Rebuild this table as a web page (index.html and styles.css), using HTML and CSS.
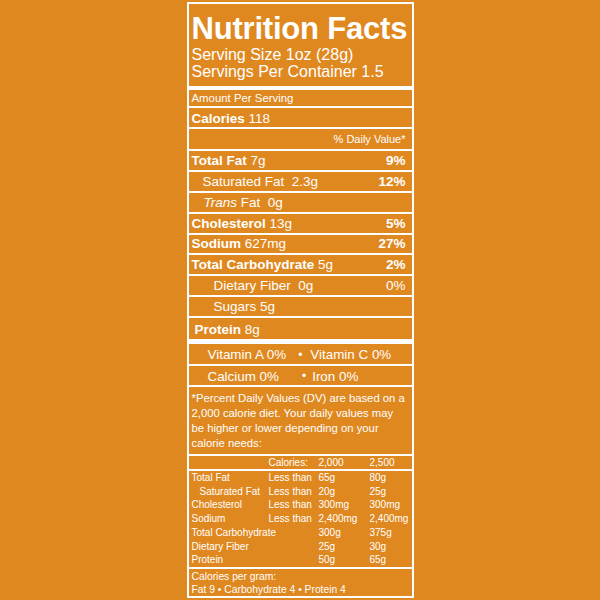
FILE: index.html
```html
<!DOCTYPE html>
<html>
<head>
<meta charset="utf-8">
<link rel="stylesheet" href="styles.css">
</head>
<body>
<div class="label">
  <div class="head">
    <h1 class="title">Nutrition Facts</h1>
    <div class="serving">Serving Size 1oz (28g)</div>
    <div class="serving">Servings Per Container 1.5</div>
  </div>
  <div class="row amount">Amount Per Serving</div>
  <div class="row calories"><span><b>Calories</b> 118</span></div>
  <div class="row dv"><span>% Daily Value*</span></div>
  <div class="row nut"><span><b>Total Fat</b> 7g</span><b>9%</b></div>
  <div class="row nut sub"><span>Saturated Fat&nbsp; 2.3g</span><b>12%</b></div>
  <div class="row nut sub trans"><span><i>Trans</i> Fat&nbsp; 0g</span></div>
  <div class="row nut"><span><b>Cholesterol</b> 13g</span><b>5%</b></div>
  <div class="row nut"><span><b>Sodium</b> 627mg</span><b>27%</b></div>
  <div class="row nut"><span><b>Total Carbohydrate</b> 5g</span><b>2%</b></div>
  <div class="row nut sub2"><span>Dietary Fiber&nbsp; 0g</span><span>0%</span></div>
  <div class="row nut sub2"><span>Sugars 5g</span></div>
  <div class="row nut protein"><span><b>Protein</b> 8g</span></div>
  <div class="row vit"><span class="v1">Vitamin A 0%</span><span class="dot d1">•</span><span class="v2a">Vitamin C 0%</span></div>
  <div class="row vit"><span class="v1">Calcium 0%</span><span class="dot d2">•</span><span class="v2b">Iron 0%</span></div>
  <div class="foot">*Percent Daily Values (DV) are based on a<br>2,000 calorie diet. Your daily values may<br>be higher or lower depending on your<br>calorie needs:</div>
  <div class="thead">
    <span></span><span>Calories:</span><span>2,000</span><span>2,500</span>
  </div>
  <div class="tbody">
    <span>Total Fat</span><span>Less than</span><span>65g</span><span>80g</span>
    <span class="ind">Saturated Fat</span><span>Less than</span><span>20g</span><span>25g</span>
    <span>Cholesterol</span><span>Less than</span><span>300mg</span><span>300mg</span>
    <span>Sodium</span><span>Less than</span><span>2,400mg</span><span>2,400mg</span>
    <span class="wide">Total Carbohydrate</span><span>300g</span><span>375g</span>
    <span class="wide">Dietary Fiber</span><span>25g</span><span>30g</span>
    <span class="wide">Protein</span><span>50g</span><span>65g</span>
  </div>
  <div class="pergram">
    <div>Calories per gram:</div>
    <div>Fat 9 • Carbohydrate 4 • Protein 4</div>
  </div>
</div>
</body>
</html>
```
FILE: styles.css
```css
html, body {
  margin: 0;
  padding: 0;
  background: #df8820;
  height: 600px;
  overflow: hidden;
}
body {
  font-family: "Liberation Sans", Arial, sans-serif;
  color: #fff;
}
.label {
  width: 223px;
  height: 592px;
  margin: 2px auto 0;
  border: 2px solid #fff;
  display: flex;
  flex-direction: column;
}
.head {
  height: 74px;
  padding: 8px 0 0 3px;
  border-bottom: 4px solid #fff;
  white-space: nowrap;
}
.title {
  margin: 0;
  font-size: 31px;
  line-height: 34px;
  font-weight: bold;
  letter-spacing: -0.2px;
}
.serving {
  font-size: 16px;
  line-height: 17px;
}
.row {
  display: flex;
  justify-content: space-between;
  align-items: center;
  padding: 0 6px 0 3px;
  border-bottom: 2px solid #fff;
  box-sizing: border-box;
  white-space: nowrap;
}
.amount {
  height: 18px;
  font-size: 11.4px;
  padding-top: 1px;
}
.calories {
  height: 21px;
  font-size: 13.5px;
  padding-top: 2px;
}
.dv {
  height: 22px;
  font-size: 11px;
  justify-content: flex-end;
  padding-top: 1px;
}
.nut {
  height: 21px;
  font-size: 13.5px;
}
.sub { padding-left: 14px; }
.trans { padding-left: 15px; }
.sub2 { padding-left: 25px; }
.protein {
  height: 26px;
  padding-left: 6px;
  padding-top: 2px;
  border-bottom-width: 5px;
}
.vit {
  height: 22px;
  font-size: 13.4px;
  justify-content: flex-start;
  padding-left: 19px;
  padding-top: 1px;
}
.vit + .vit { height: 21px; }
.dot { font-size: 12px; }
.d1 { margin-left: 12px; }
.v2a { margin-left: 8px; }
.d2 { margin-left: 23px; }
.v2b { margin-left: 6px; }
.foot {
  height: 63px;
  padding: 4px 0 0 3px;
  font-size: 11.3px;
  line-height: 15px;
  white-space: nowrap;
  border-bottom: 2px solid #fff;
}
.thead, .tbody {
  display: grid;
  grid-template-columns: 77px 50px 51px 1fr;
  padding-left: 3px;
  font-size: 10px;
  white-space: nowrap;
  border-bottom: 2px solid #fff;
}
.thead {
  height: 12px;
  line-height: 12px;
  padding-top: 1px;
}
.tbody {
  height: 96px;
  line-height: 13.7px;
}
.ind { padding-left: 8px; }
.wide { grid-column: span 2; }
.pergram {
  flex: 1;
  padding-left: 3px;
  font-size: 10.3px;
  line-height: 13px;
  padding-top: 1px;
}
```
